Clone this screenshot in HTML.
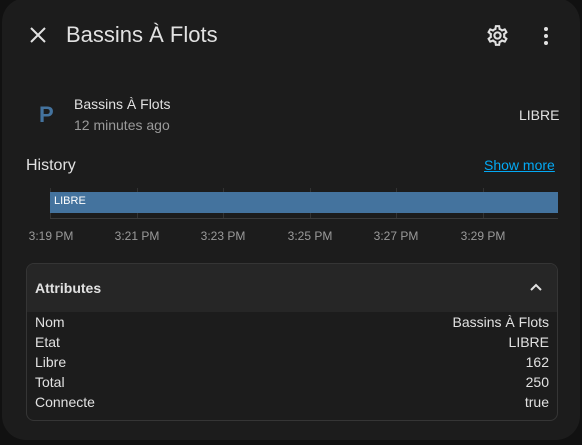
<!DOCTYPE html>
<html><head><style>
*{margin:0;padding:0;box-sizing:border-box}
body{width:582px;height:445px;background:#111;font-family:"Liberation Sans",sans-serif;color:#e1e1e1;position:relative;overflow:hidden}
.dlg{position:absolute;left:2px;top:-2px;width:578px;height:442px;background:#1c1c1c;border-radius:24px}
.a{position:absolute;white-space:nowrap}
.tick{position:absolute;top:188px;width:1px;height:30px;background:#333}
.lab{position:absolute;top:229px;font-size:12px;color:#9a9a9a;transform:translateX(-50%)}
.row{position:absolute;left:35px;width:514px;font-size:14px;display:flex;justify-content:space-between}
</style></head><body>
<div class="dlg"></div>
<svg class="a" style="left:28px;top:25px" width="20" height="20" viewBox="0 0 20 20"><path d="M3 3L17 17M17 3L3 17" stroke="#e1e1e1" stroke-width="2"/></svg>
<div class="a" style="left:66px;top:22px;font-size:22px;color:#e1e1e1">Bassins À Flots</div>
<svg class="a" style="left:485px;top:23px" width="25" height="25" viewBox="0 0 24 24"><path fill="#e1e1e1" d="M12,8A4,4 0 0,1 16,12A4,4 0 0,1 12,16A4,4 0 0,1 8,12A4,4 0 0,1 12,8M12,10A2,2 0 0,0 10,12A2,2 0 0,0 12,14A2,2 0 0,0 14,12A2,2 0 0,0 12,10M10,22C9.75,22 9.54,21.82 9.5,21.58L9.13,18.93C8.5,18.68 7.960,18.34 7.440,17.94L4.95,18.95C4.73,19.03 4.46,18.95 4.34,18.73L2.34,15.270C2.21,15.05 2.27,14.78 2.46,14.63L4.57,12.97L4.5,12L4.57,11L2.46,9.37C2.27,9.22 2.21,8.95 2.34,8.73L4.34,5.27C4.46,5.05 4.73,4.96 4.95,5.05L7.44,6.05C7.96,5.66 8.5,5.32 9.13,5.07L9.5,2.42C9.54,2.18 9.75,2 10,2H14C14.25,2 14.46,2.18 14.5,2.42L14.87,5.07C15.5,5.32 16.04,5.66 16.56,6.05L19.05,5.05C19.27,4.96 19.54,5.05 19.66,5.27L21.66,8.73C21.79,8.95 21.73,9.22 21.54,9.37L19.43,11L19.5,12L19.43,13L21.54,14.63C21.73,14.78 21.79,15.05 21.66,15.27L19.66,18.73C19.54,18.95 19.27,19.04 19.05,18.95L16.56,17.95C16.04,18.34 15.5,18.68 14.87,18.93L14.5,21.58C14.46,21.82 14.25,22 14,22H10M11.25,4L10.88,6.61C9.68,6.86 8.62,7.5 7.85,8.39L5.44,7.35L4.69,8.65L6.8,10.2C6.4,11.37 6.4,12.64 6.8,13.8L4.68,15.36L5.43,16.66L7.86,15.62C8.63,16.5 9.68,17.14 10.87,17.38L11.24,20H12.76L13.13,17.39C14.32,17.14 15.37,16.5 16.14,15.62L18.57,16.66L19.32,15.36L17.2,13.81C17.6,12.64 17.6,11.37 17.2,10.2L19.31,8.65L18.56,7.35L16.15,8.39C15.38,7.5 14.32,6.86 13.12,6.62L12.75,4H11.25Z"/></svg>
<svg class="a" style="left:542px;top:26px" width="8" height="20" viewBox="0 0 8 20"><circle cx="4" cy="3" r="2" fill="#e1e1e1"/><circle cx="4" cy="10" r="2" fill="#e1e1e1"/><circle cx="4" cy="17" r="2" fill="#e1e1e1"/></svg>
<div class="a" style="left:39px;top:102px;font-size:22px;font-weight:bold;color:#44739e">P</div>
<div class="a" style="left:74px;top:96px;font-size:14px;color:#e1e1e1">Bassins À Flots</div>
<div class="a" style="left:74px;top:117px;font-size:14px;color:#9a9a9a">12 minutes ago</div>
<div class="a" style="left:519px;top:107px;font-size:14px;color:#e1e1e1">LIBRE</div>
<div class="a" style="left:26px;top:157px;font-size:16px;color:#e1e1e1">History</div>
<div class="a" style="left:484px;top:157px;font-size:14px;color:#03a9f4;text-decoration:underline">Show more</div>
<div class="tick" style="left:50px"></div>
<div class="tick" style="left:137px"></div><div class="tick" style="left:223px"></div><div class="tick" style="left:310px"></div><div class="tick" style="left:396px"></div><div class="tick" style="left:483px"></div>
<div class="a" style="left:50px;top:218px;width:508px;height:1px;background:#3a3a3a"></div>
<div class="a" style="left:50px;top:192px;width:508px;height:21px;background:#44739e"></div>
<div class="a" style="left:54px;top:195px;font-size:11px;color:#fff">LIBRE</div>
<div class="lab" style="left:51px">3:19 PM</div><div class="lab" style="left:137px">3:21 PM</div><div class="lab" style="left:223px">3:23 PM</div><div class="lab" style="left:310px">3:25 PM</div><div class="lab" style="left:396px">3:27 PM</div><div class="lab" style="left:483px">3:29 PM</div>
<div class="a" style="left:26px;top:263px;height:158px;border:1px solid #353535;border-radius:8px;overflow:hidden;width:532px"><div style="height:48px;background:#262626"></div></div>
<div class="a" style="left:35px;top:280px;font-size:14px;font-weight:bold;color:#e1e1e1">Attributes</div>
<svg class="a" style="left:528px;top:281px" width="16" height="12" viewBox="0 0 16 12"><path d="M3 9L8 4L13 9" stroke="#e1e1e1" stroke-width="2" fill="none"/></svg>
<div class="row" style="top:314px"><span>Nom</span><span>Bassins À Flots</span></div>
<div class="row" style="top:334px"><span>Etat</span><span>LIBRE</span></div>
<div class="row" style="top:354px"><span>Libre</span><span>162</span></div>
<div class="row" style="top:374px"><span>Total</span><span>250</span></div>
<div class="row" style="top:394px"><span>Connecte</span><span>true</span></div>
</body></html>
